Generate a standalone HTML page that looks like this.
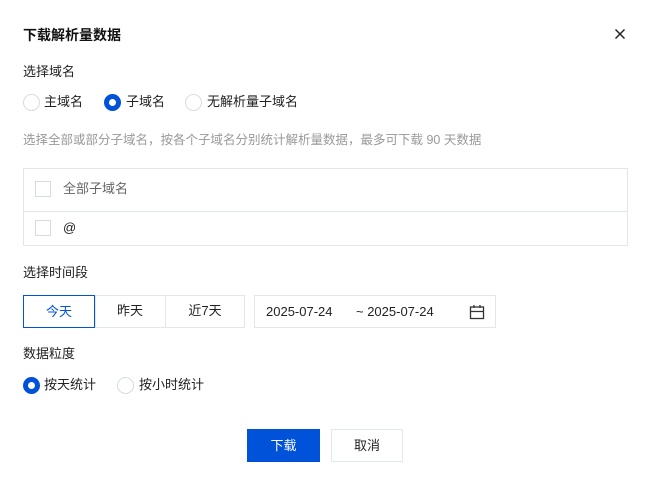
<!DOCTYPE html>
<html><head><meta charset="utf-8"><style>
*{box-sizing:border-box;margin:0;padding:0}
body{width:649px;height:486px;background:#fff;font-family:"Liberation Sans","Noto Sans CJK SC",sans-serif;font-size:13px;color:#222;position:relative;overflow:hidden}
.a{position:absolute;white-space:nowrap}
.r{position:absolute;width:17px;height:17px;border-radius:50%;border:1px solid #d6dbe3;background:#fff}
.r.on{border:5px solid #0052d9}
.cb{position:absolute;width:16px;height:16px;border:1px solid #d6dbe3;background:#fff}
.lbl{line-height:18px}
</style></head><body>
<div class="a" style="left:23px;top:25px;font-size:14px;font-weight:bold;color:#111">下载解析量数据</div>
<svg class="a" style="left:614px;top:28px" width="12" height="12" viewBox="0 0 12 12"><path d="M1.5 1.5L10.5 10.5M10.5 1.5L1.5 10.5" stroke="#222" stroke-width="1.5"/></svg>
<div class="a lbl" style="left:23px;top:63px">选择域名</div>
<div class="r" style="left:23px;top:94px"></div><div class="a lbl" style="left:44px;top:93px">主域名</div>
<div class="r on" style="left:104px;top:94px"></div><div class="a lbl" style="left:126px;top:93px">子域名</div>
<div class="r" style="left:185px;top:94px"></div><div class="a lbl" style="left:207px;top:93px">无解析量子域名</div>
<div class="a lbl" style="left:23px;top:131px;color:#999;font-size:12.5px">选择全部或部分子域名，按各个子域名分别统计解析量数据，最多可下载 90 天数据</div>
<div class="a" style="left:23px;top:168px;width:605px;height:78px;border:1px solid #e3e6eb"></div>
<div class="a" style="left:24px;top:211px;width:603px;height:1px;background:#e3e6eb"></div>
<div class="cb" style="left:35px;top:181px"></div><div class="a lbl" style="left:63px;top:180px;color:#666">全部子域名</div>
<div class="cb" style="left:35px;top:220px"></div><div class="a lbl" style="left:63px;top:219px">@</div>
<div class="a lbl" style="left:23px;top:264px">选择时间段</div>
<div class="a" style="left:95px;top:295px;width:150px;height:33px;border:1px solid #e3e6eb"></div>
<div class="a" style="left:165px;top:295px;width:1px;height:33px;background:#e3e6eb"></div>
<div class="a" style="left:23px;top:295px;width:72px;height:33px;border:1px solid #0052d9;color:#0052d9;text-align:center;line-height:31px">今天</div>
<div class="a" style="left:95px;top:295px;width:70px;line-height:31px;text-align:center">昨天</div>
<div class="a" style="left:165px;top:295px;width:80px;line-height:31px;text-align:center">近7天</div>
<div class="a" style="left:254px;top:295px;width:242px;height:33px;border:1px solid #e3e6eb"></div>
<div class="a" style="left:266px;top:295px;line-height:33px">2025-07-24</div>
<div class="a" style="left:356px;top:295px;line-height:33px">~ 2025-07-24</div>
<svg class="a" style="left:469px;top:304px" width="16" height="16" viewBox="0 0 16 16"><rect x="1.5" y="3" width="13" height="11.5" fill="none" stroke="#333" stroke-width="1.3"/><path d="M1.5 7.5H14.5M5 1V4M11 1V4" stroke="#333" stroke-width="1.3"/></svg>
<div class="a lbl" style="left:23px;top:345px">数据粒度</div>
<div class="r on" style="left:23px;top:377px"></div><div class="a lbl" style="left:44px;top:376px">按天统计</div>
<div class="r" style="left:117px;top:377px"></div><div class="a lbl" style="left:139px;top:376px">按小时统计</div>
<div class="a" style="left:247px;top:429px;width:73px;height:33px;background:#0052d9;color:#fff;text-align:center;line-height:33px">下载</div>
<div class="a" style="left:331px;top:429px;width:72px;height:33px;border:1px solid #e3e6eb;text-align:center;line-height:31px">取消</div>
</body></html>
